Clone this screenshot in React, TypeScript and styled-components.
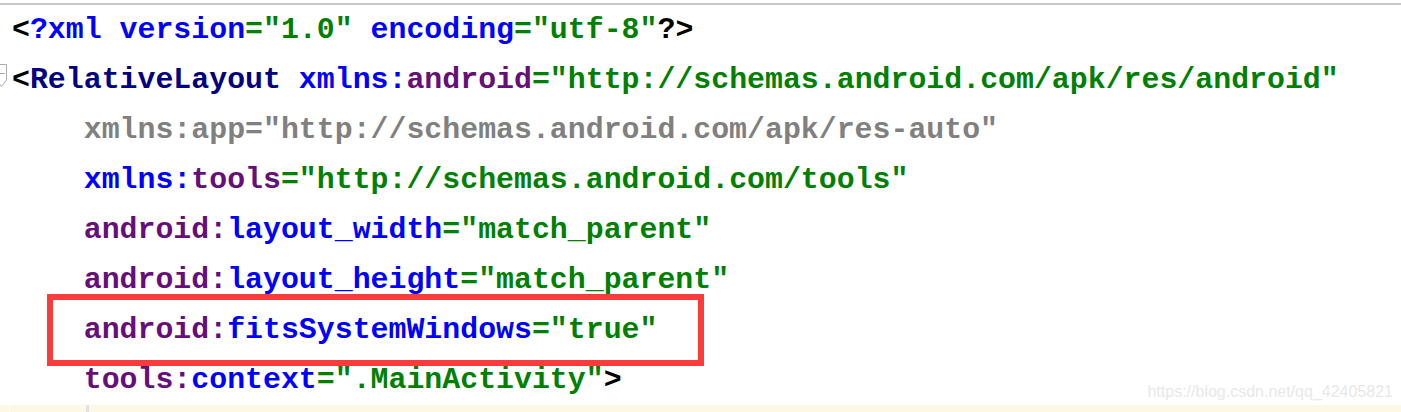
import React from "react";
import styled, { createGlobalStyle } from "styled-components";

const Global = createGlobalStyle`
  html, body { margin: 0; padding: 0; background: #ffffff; }
  body { width: 1401px; height: 412px; overflow: hidden; }
`;

const Editor = styled.div`
  position: relative;
  width: 1401px;
  height: 412px;
  overflow: hidden;
  background: #ffffff;
  padding-top: 3px;
  box-sizing: border-box;
`;

const TopRule = styled.div`
  height: 2px;
  background: #c8c8c8;
`;

const Line = styled.div<{ $current?: boolean }>`
  display: flex;
  height: 50px;
  background: ${(p) => (p.$current ? "#fdf8e4" : "transparent")};
`;

const Gutter = styled.div<{ $current?: boolean }>`
  display: flex;
  align-items: flex-start;
  justify-content: flex-end;
  width: 10px;
  flex: none;
  padding-top: 9px;
  box-sizing: border-box;
  overflow: visible;
  border-right: 1px solid ${(p) => (p.$current ? "#ffffff" : "transparent")};
`;

const Code = styled.div<{ $indent?: number }>`
  display: flex;
  padding-left: ${(p) => 2 + (p.$indent || 0) * 17.93}px;
  font-family: "Liberation Mono", "DejaVu Sans Mono", monospace;
  font-weight: bold;
  font-size: 29.88px;
  line-height: 50px;
  white-space: pre;
  color: #000000;
`;

const IndentGuide = styled.div`
  margin-left: 74px;
  width: 3px;
  height: 50px;
  background: #e2e2e2;
`;

const Tk = styled.span<{ $c: string }>`
  color: ${(p) => p.$c};
`;

const FoldMarker = styled.svg`
  flex: none;
  margin-right: 1px;
`;

const Highlight = styled.div`
  position: absolute;
  left: 47px;
  top: 294px;
  width: 657px;
  height: 72px;
  border: 6px solid #f93b3b;
  box-sizing: border-box;
  pointer-events: none;
`;

const Watermark = styled.div`
  position: absolute;
  right: 8px;
  top: 383px;
  font-family: "Liberation Sans", Arial, sans-serif;
  font-size: 16px;
  color: #e8e8e8;
`;

const BLUE = "#0000ff";
const NAVY = "#000080";
const PURPLE = "#660e7a";
const GREEN = "#008000";
const GRAY = "#808080";
const BLACK = "#000000";

type Tok = [string, string];

const lines: { indent: number; toks: Tok[]; fold?: boolean }[] = [
  {
    indent: 0,
    toks: [
      ["<", BLACK],
      ["?xml version", BLUE],
      ['="1.0"', GREEN],
      [" encoding", BLUE],
      ['="utf-8"', GREEN],
      ["?>", BLACK],
    ],
  },
  {
    indent: 0,
    fold: true,
    toks: [
      ["<", BLACK],
      ["RelativeLayout ", NAVY],
      ["xmlns:", BLUE],
      ["android", PURPLE],
      ['="http://schemas.android.com/apk/res/android"', GREEN],
    ],
  },
  {
    indent: 4,
    toks: [['xmlns:app="http://schemas.android.com/apk/res-auto"', GRAY]],
  },
  {
    indent: 4,
    toks: [
      ["xmlns:", BLUE],
      ["tools", PURPLE],
      ['="http://schemas.android.com/tools"', GREEN],
    ],
  },
  {
    indent: 4,
    toks: [
      ["android:", PURPLE],
      ["layout_width", BLUE],
      ['="match_parent"', GREEN],
    ],
  },
  {
    indent: 4,
    toks: [
      ["android:", PURPLE],
      ["layout_height", BLUE],
      ['="match_parent"', GREEN],
    ],
  },
  {
    indent: 4,
    toks: [
      ["android:", PURPLE],
      ["fitsSystemWindows", BLUE],
      ['="true"', GREEN],
    ],
  },
  {
    indent: 4,
    toks: [
      ["tools:", PURPLE],
      ["context", BLUE],
      ['=".MainActivity"', GREEN],
      [">", BLACK],
    ],
  },
];

export default function App() {
  return (
    <>
      <Global />
      <Editor>
        <TopRule />
        {lines.map((l, i) => (
          <Line key={i}>
            <Gutter>
              {l.fold && (
                <FoldMarker width="12" height="24" viewBox="0 0 12 24">
                  <path
                    d="M0.5 0.5 H10.5 V16 L5.5 22.5 L0.5 16 Z"
                    fill="#ffffff"
                    stroke="#ababab"
                    strokeWidth="1"
                  />
                  <path d="M3 9.5 H9" stroke="#ababab" strokeWidth="1" />
                </FoldMarker>
              )}
            </Gutter>
            <Code $indent={l.indent}>
              {l.toks.map(([t, c], j) => (
                <Tk key={j} $c={c}>
                  {t}
                </Tk>
              ))}
            </Code>
          </Line>
        ))}
        <Line $current>
          <Gutter $current />
          <Code>
            <IndentGuide />
          </Code>
        </Line>
        <Highlight />
        <Watermark>https://blog.csdn.net/qq_42405821</Watermark>
      </Editor>
    </>
  );
}
